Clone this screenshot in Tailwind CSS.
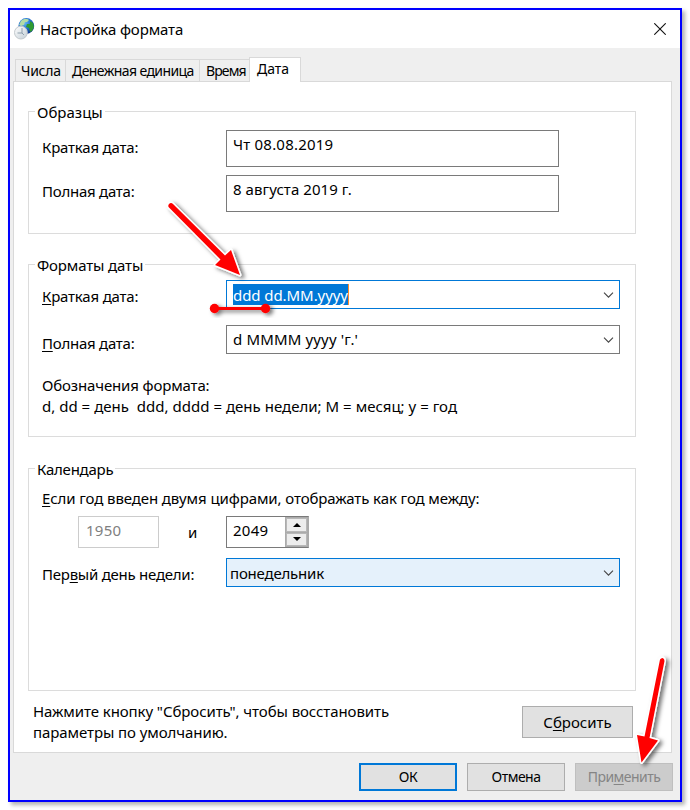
<!DOCTYPE html>
<html lang="ru">
<head>
<meta charset="utf-8">
<title>Настройка формата</title>
<script src="https://cdn.jsdelivr.net/npm/@tailwindcss/browser@4"></script>
</head>
<body class="relative h-[810px] w-[690px] overflow-hidden bg-white pt-2 pl-2 font-['Noto_Sans','Open_Sans',sans-serif] text-[15px] leading-[21px] text-black">
<main class="flex h-[794px] w-[674px] flex-col border-2 border-[#0000ff] bg-[#efefef] shadow-[3px_3px_4px_rgba(0,0,0,0.3)]">
  <header class="flex h-[38px] shrink-0 items-center bg-white pr-[14px] pl-1">
    <svg class="h-[22px] w-[22px]" viewBox="0 0 22 22">
      <defs>
        <radialGradient id="globe" cx=".4" cy=".3" r=".75"><stop offset="0" stop-color="#65b9f5"/><stop offset=".5" stop-color="#2371cf"/><stop offset="1" stop-color="#082d82"/></radialGradient>
        <linearGradient id="clock" x2="1" y2="1"><stop stop-color="#fff"/><stop offset="1" stop-color="#c3ced6"/></linearGradient>
      </defs>
      <circle cx="12.3" cy="8" r="7.9" fill="url(#globe)"/>
      <path d="M7 3C10 0 14 1 15 2L13 4L11 4L10 7L7 8L5 7Z" fill="#b4dca6"/>
      <path d="M16 3L19 5L20 9L18 13L16 14L15 10L12 9L13 6L16 6Z" fill="#2f9a32"/>
      <circle cx="6.9" cy="14.6" r="6.4" fill="url(#clock)" stroke="#c3c9cd"/>
      <path d="M8 10V15H3.500M8 15L10 17" fill="none" stroke="#8fa0ad"/>
    </svg>
    <h1 class="ml-1 flex-1 whitespace-pre tracking-[-0.12px]">Настройка формата</h1>
    <svg class="h-3 w-3" viewBox="0 0 12 12"><path d="M.3.3L11.7 11.7M11.7.3L.3 11.7" stroke="#111" stroke-width="1.1"/></svg>
  </header>

  <nav class="relative z-10 -mb-px flex h-[34px] shrink-0 items-end pl-[5px] text-[14px]">
    <div class="mb-px h-[22px] w-[50px] border-t border-l border-[#d9d9d9] pl-[5px] leading-[22px] tracking-[-0.25px]">Числа</div>
    <div class="mb-px h-[22px] w-[134px] border-t border-l border-[#d9d9d9] pl-[6px] leading-[22px] tracking-[-0.58px] whitespace-nowrap">Денежная единица</div>
    <div class="mb-px h-[22px] w-[50px] border-t border-l border-[#d9d9d9] pl-[6px] leading-[22px] tracking-[-0.9px]">Время</div>
    <div class="h-[25px] w-[52px] border-x border-t border-[#d9d9d9] bg-white pl-[7px] leading-[22px]">Дата</div>
  </nav>

  <section class="ml-[3px] flex h-[672px] w-[659px] shrink-0 flex-col border border-[#d9d9d9] bg-white pt-[29px] pl-[14px]">
    <section class="relative h-[123px] w-[608px] border border-[#dcdcdc] pt-[18px] pl-[13px]">
      <h2 class="absolute -top-[10px] left-[6px] bg-white px-[2px] whitespace-nowrap">Образцы</h2>
      <div class="flex h-[37px]"><span class="w-[184px] pt-[7px] tracking-[-0.2px]">Краткая дата:</span><div class="w-[333px] border border-[#7a7a7a] pt-[3px] pl-[6px] tracking-[0.2px]">Чт 08.08.2019</div></div>
      <div class="mt-2 flex h-[37px]"><span class="w-[184px] pt-[6px] tracking-[-0.25px]">Полная дата:</span><div class="w-[333px] border border-[#7a7a7a] pt-[3px] pl-[6px] tracking-[0.06px]">8 августа 2019 г.</div></div>
    </section>

    <section class="relative mt-[30px] h-[173px] w-[608px] border border-[#dcdcdc] pt-[15px] pl-[13px]">
      <h2 class="absolute -top-[10px] left-[6px] bg-white px-[2px] tracking-[-0.15px] whitespace-nowrap">Форматы даты</h2>
      <div class="flex h-[29px]">
        <span class="w-[184px] pt-[6px] tracking-[-0.2px]"><u class="underline-offset-2">К</u>раткая дата:</span>
        <div class="flex w-[394px] items-center justify-between border border-[#0078d7] pr-[5px] pl-[6px]"><span class="h-[21px] border-r border-[#ff8a28] bg-[#0078d7] leading-[22px] tracking-[-0.07px] text-white">ddd dd.MM.yyyy</span><svg class="h-[6px] w-[11px]" viewBox="0 0 11 6"><path d="M1 .7L5.5 5.2L10 .7" fill="none" stroke="#444" stroke-width="1.1"/></svg></div>
      </div>
      <div class="mt-4 flex h-[29px]">
        <span class="w-[184px] pt-[8px] tracking-[-0.25px]"><u class="underline-offset-2">П</u>олная дата:</span>
        <div class="flex w-[394px] items-center justify-between border border-[#7a7a7a] pr-[5px] pl-[6px]"><span class="tracking-[0.15px]">d MMMM yyyy 'г.'</span><svg class="h-[6px] w-[11px]" viewBox="0 0 11 6"><path d="M1 .7L5.5 5.2L10 .7" fill="none" stroke="#444" stroke-width="1.1"/></svg></div>
      </div>
      <p class="mt-[21px] tracking-[-0.15px] whitespace-pre">Обозначения формата:</p>
      <p class="tracking-[0.02px] whitespace-pre">d, dd = день  ddd, dddd = день недели; M = месяц; y = год</p>
    </section>

    <section class="relative mt-[31px] h-[223px] w-[608px] border border-[#dcdcdc] pt-[19px] pl-[13px]">
      <h2 class="absolute -top-[10px] left-[6px] bg-white px-[2px] tracking-[-0.25px] whitespace-nowrap">Календарь</h2>
      <p class="tracking-[-0.1px] whitespace-pre"><u class="underline-offset-2">Е</u>сли год введен двумя цифрами, отображать как год между:</p>
      <div class="mt-[7px] flex h-[32px] pl-[36px]">
        <div class="w-[81px] border border-[#ccc] pt-[3px] pl-[7px] tracking-[0.25px] text-[#808080]">1950</div>
        <span class="w-[67px] pt-[6px] pl-[29px]">и</span>
        <div class="flex w-[83px] border border-r-[#aaa] border-[#7a7a7a]">
          <span class="flex-1 pt-[3px] pl-[6px] tracking-[0.25px]">2049</span>
          <div class="flex w-[23px] flex-col gap-px bg-[#ababab] p-px">
            <div class="flex flex-1 items-center justify-center border border-[#b8b8b8] bg-[#ededed]"><svg class="h-1 w-2" viewBox="0 0 8 4"><path d="M0 4L4 0L8 4Z"/></svg></div>
            <div class="flex flex-1 items-center justify-center border border-[#b8b8b8] bg-[#ededed]"><svg class="h-1 w-2" viewBox="0 0 8 4"><path d="M0 0H8L4 4Z"/></svg></div>
          </div>
        </div>
      </div>
      <div class="mt-[10px] flex h-[29px]">
        <span class="w-[184px] pt-[6px] tracking-[-0.25px]">Пер<u class="underline-offset-2">в</u>ый день недели:</span>
        <div class="flex w-[394px] items-center justify-between border border-[#0078d7] bg-[#e5f1fb] pr-[5px] pl-[3px]"><span class="pt-px tracking-[-0.2px]">понедельник</span><svg class="h-[6px] w-[11px]" viewBox="0 0 11 6"><path d="M1 .7L5.5 5.2L10 .7" fill="none" stroke="#444" stroke-width="1.1"/></svg></div>
      </div>
    </section>

    <div class="mt-[10px] flex pl-[5px]">
      <p class="w-[489px] tracking-[-0.08px] whitespace-pre">Нажмите кнопку "Сбросить", чтобы восстановить
параметры по умолчанию.</p>
      <button class="mt-[5px] h-[32px] w-[111px] border border-[#adadad] bg-[#e1e1e1]">С<u class="underline-offset-2">б</u>росить</button>
    </div>
  </section>

  <footer class="mt-[10px] flex h-[28px] justify-end gap-[10px] pr-[7px] text-[14px] leading-[20px]">
    <button class="w-[98px] border-2 border-[#0078d7] bg-[#e1e1e1] tracking-[-0.5px]">ОК</button>
    <button class="w-[98px] border border-[#adadad] bg-[#e1e1e1] tracking-[-0.5px]">Отмена</button>
    <button class="w-[98px] border border-[#bfbfbf] bg-[#cccccc] tracking-[-0.55px] text-[#858585]">При<u class="underline-offset-2">м</u>енить</button>
  </footer>
</main>

<svg class="pointer-events-none absolute top-0 left-0 z-20 h-[810px] w-[690px]" viewBox="0 0 690 810">
  <defs><filter id="shade" x="-50%" y="-50%" width="200%" height="200%"><feDropShadow dx="3" dy="2" stdDeviation="2" flood-color="#000" flood-opacity=".55"/></filter></defs>
  <g filter="url(#shade)" fill="red" stroke="#fff" stroke-width="3" stroke-linejoin="round" style="paint-order:stroke">
    <path d="M169 207.500L220.500 259.500L215 265L240 275L231 250L225 255.500L173 204Q171 202 169 204Q167.500 206 169 207.500Z"/>
    <path d="M660 659.500L644.500 736.500L637 735L641.500 762.500L658 740.500L649.500 738L664.500 661Q664.500 658.500 662.500 658Q661 658 660 659.500Z"/>
  </g>
  <g filter="url(#shade)" fill="red"><path d="M215 307H266V310H215Z"/><circle cx="214.500" cy="308.500" r="4.700"/><circle cx="265.500" cy="308.500" r="4.700"/></g>
</svg>
</body>
</html>
